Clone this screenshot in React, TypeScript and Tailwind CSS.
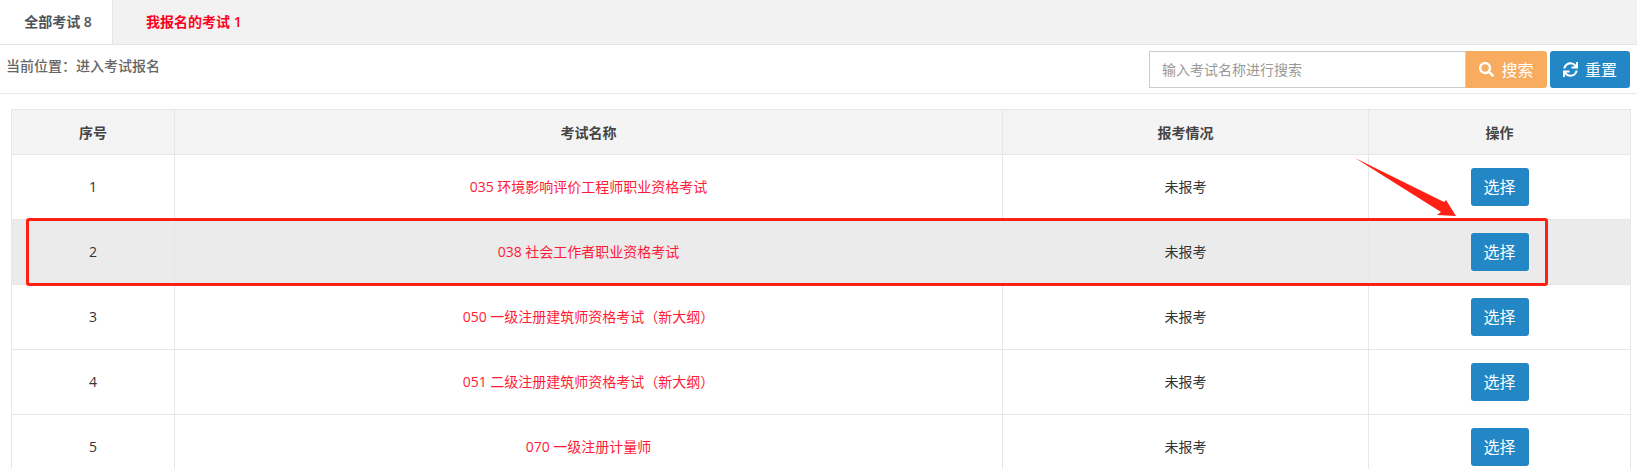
import { FaSearch, FaSync } from 'react-icons/fa';

const exams = [
  { id: 1, name: '035 环境影响评价工程师职业资格考试' },
  { id: 2, name: '038 社会工作者职业资格考试' },
  { id: 3, name: '050 一级注册建筑师资格考试（新大纲）' },
  { id: 4, name: '051 二级注册建筑师资格考试（新大纲）' },
  { id: 5, name: '070 一级注册计量师' },
];

const cellClass = 'border border-[#e7e7e7] text-center align-middle';

const App = () => {
  return (
    <div className="relative h-[469px] w-[1637px] overflow-hidden bg-white font-['Open_Sans','Noto_Sans_CJK_SC',sans-serif] text-[14px] text-[#333]">
      <div className="flex h-[45px] border-b border-[#e2e4e8] bg-[#f2f2f2]">
        <div className="flex w-[113px] items-center justify-center border-r border-[#e2e4e8] bg-white pb-[1px] pl-[4px] font-semibold text-[#4d5259]">
          全部考试 8
        </div>
        <div className="flex items-center pb-[1px] pl-[33px] font-semibold text-[#ff0022]">我报名的考试 1</div>
      </div>

      <div className="flex h-[49px] justify-between border-b border-[#e9e9e9] pr-[7px] pt-[6px]">
        <div className="pl-[6px] pt-[4px] font-medium text-[#666]">当前位置：进入考试报名</div>
        <div className="flex h-[37px]">
          <div className="flex w-[317px] items-center border border-[#ccc] pl-[12px] text-[#999]">
            输入考试名称进行搜索
          </div>
          <button type="button" className="flex w-[81px] items-center justify-center gap-[7px] rounded-r-[3px] bg-[#f8ac5f] text-[16px] text-white">
            <FaSearch size={15} />
            搜索
          </button>
          <button type="button" className="ml-[3px] flex w-[80px] items-center justify-center gap-[7px] rounded-[3px] bg-[#2386c5] text-[16px] text-white">
            <FaSync size={15} />
            重置
          </button>
        </div>
      </div>

      <div className="pl-[11px] pt-[15px]">
        <table className="w-[1620px] table-fixed border-collapse">
          <thead>
            <tr className="h-[45px] bg-[#f4f4f4] text-[#444]">
              <th className={`${cellClass} w-[163px] font-semibold`}>序号</th>
              <th className={`${cellClass} w-[828px] font-semibold`}>考试名称</th>
              <th className={`${cellClass} w-[366px] font-semibold`}>报考情况</th>
              <th className={`${cellClass} font-semibold`}>操作</th>
            </tr>
          </thead>
          <tbody>
            {exams.map((exam) => (
              <tr key={exam.id} className={`h-[65px] ${exam.id === 2 ? 'bg-[#ebebeb]' : 'bg-white'}`}>
                <td className={`${cellClass} pb-[2px]`}>{exam.id}</td>
                <td className={`${cellClass} pb-[2px] text-[#ff1a36]`}>{exam.name}</td>
                <td className={`${cellClass} pb-[2px]`}>未报考</td>
                <td className={cellClass}>
                  <button type="button" className="h-[38px] w-[58px] rounded-[3px] bg-[#2386c5] text-[16px] text-white">
                    选择
                  </button>
                </td>
              </tr>
            ))}
          </tbody>
        </table>
      </div>

      <div className="absolute left-[26px] top-[218px] h-[68px] w-[1522px] rounded-[3px] border-[3px] border-[#ff2015]" />
      <svg className="absolute left-[1350px] top-[150px]" width="110" height="72" viewBox="0 0 110 72">
        <path d="M5 8 L94 52 L96 50 L106 66 L87 65 L91 62 Z" fill="#ff2015" />
      </svg>
    </div>
  );
};

export default App;
